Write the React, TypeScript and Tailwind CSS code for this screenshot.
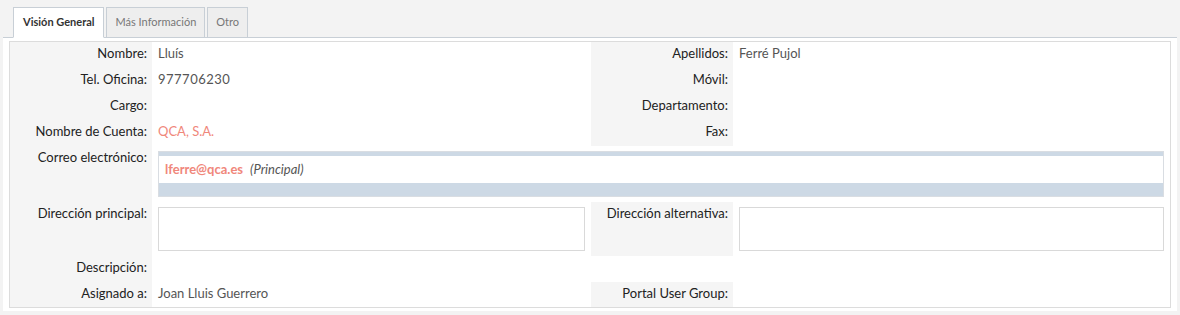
import React from "react";

const TABS = [
  { id: "general", label: "Visión General", active: true },
  { id: "more", label: "Más Información", active: false },
  { id: "other", label: "Otro", active: false },
];

const Label: React.FC<{ text: string; h: string }> = ({ text, h }) => (
  <div className={`${h} bg-[#f5f5f5] pr-[5px] pt-[2px] text-right text-[13px] leading-[18px] text-[#222]`}>{text}</div>
);

const Value: React.FC<{ text?: string; link?: boolean; h: string; wide?: boolean; spaced?: boolean }> = ({
  text,
  link,
  h,
  wide,
  spaced,
}) => (
  <div
    className={`${h} pl-[6px] pt-[2px] text-[13px] leading-[18px] ${link ? "text-[#f0877b]" : "text-[#555]"} ${
      wide ? "col-span-3" : ""
    } ${spaced ? "tracking-[0.5px]" : ""}`}
  >
    {text}
  </div>
);

const AddressBox: React.FC = () => (
  <div className="h-[54px] px-[6px] py-[5px]">
    <div className="h-[44px] border border-[#d9d9d9] bg-white" />
  </div>
);

export default function App() {
  return (
    <div className="w-[1180px] h-[315px] bg-[#f3f3f3] font-['Lato','Liberation_Sans',sans-serif]">
      <div className="relative z-10 flex gap-[2px] pl-[13px] pt-[7px]">
        {TABS.map((t) => (
          <div
            key={t.id}
            className={`-mb-px flex h-[31px] items-center border border-[#c8cfd6] text-[11px] ${
              t.active ? "border-b-white bg-white px-[9px] font-bold text-[#333]" : "bg-[#eeeeee] px-[8px] text-[#777]"
            }`}
          >
            {t.label}
          </div>
        ))}
      </div>
      <div className="mx-[3px] border-t border-[#c8cfd6] bg-white px-[6px] pt-[3px] pb-[3px]">
        <div className="grid grid-cols-[142px_439px_142px_1fr] border border-[#dcdcdc]">
          <Label text="Nombre:" h="h-[26px]" />
          <Value text="Lluís" h="h-[26px]" />
          <Label text="Apellidos:" h="h-[26px]" />
          <Value text="Ferré Pujol" h="h-[26px]" />

          <Label text="Tel. Oficina:" h="h-[26px]" />
          <Value text="977706230" h="h-[26px]" spaced />
          <Label text="Móvil:" h="h-[26px]" />
          <Value h="h-[26px]" />

          <Label text="Cargo:" h="h-[26px]" />
          <Value h="h-[26px]" />
          <Label text="Departamento:" h="h-[26px]" />
          <Value h="h-[26px]" />

          <Label text="Nombre de Cuenta:" h="h-[26px]" />
          <Value text="QCA, S.A." link h="h-[26px]" />
          <Label text="Fax:" h="h-[26px]" />
          <Value h="h-[26px]" />

          <Label text="Correo electrónico:" h="h-[56px]" />
          <div className="col-span-3 h-[56px] px-[6px] py-[5px]">
            <div className="border border-[#d9dde2] bg-[#cdd9e5] pt-[4px] pb-[13px]">
              <div className="flex h-[27px] items-center gap-[7px] bg-white pl-[6px] text-[13px]">
                <span className="font-bold text-[#f0877b]">lferre@qca.es</span>
                <span className="italic text-[#555]">(Principal)</span>
              </div>
            </div>
          </div>

          <Label text="Dirección principal:" h="h-[54px]" />
          <AddressBox />
          <Label text="Dirección alternativa:" h="h-[54px]" />
          <AddressBox />

          <Label text="Descripción:" h="h-[26px]" />
          <Value h="h-[26px]" wide />

          <Label text="Asignado a:" h="h-[25px]" />
          <Value text="Joan Lluis Guerrero" h="h-[25px]" />
          <Label text="Portal User Group:" h="h-[25px]" />
          <Value h="h-[25px]" />
        </div>
      </div>
    </div>
  );
}
